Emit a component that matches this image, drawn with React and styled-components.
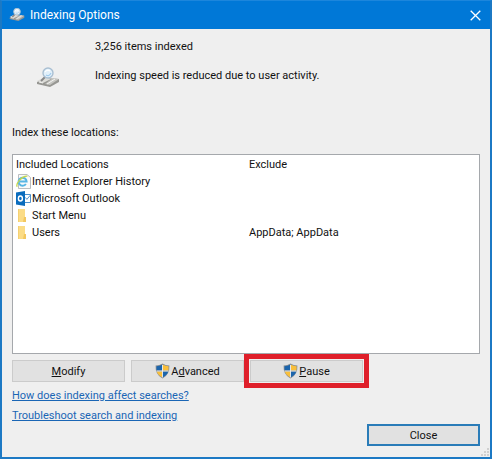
import React from "react";
import styled, { createGlobalStyle } from "styled-components";

const locations = [
  { id: 1, icon: "ie", name: "Internet Explorer History", exclude: "" },
  { id: 2, icon: "outlook", name: "Microsoft Outlook", exclude: "" },
  { id: 3, icon: "folder", name: "Start Menu", exclude: "" },
  { id: 4, icon: "folder", name: "Users", exclude: "AppData; AppData" },
];

const DriveIcon = ({ size }) => (
  <svg width={size} height={size} viewBox="0 0 24 24" aria-hidden="true">
    <path d="M1 16 L9 12 L23 13 L23 16 L14 21 L1 18 Z" fill="#979793" />
    <path d="M1 15 L9 11 L15 13 L7 17 Z" fill="#dcdcd8" />
    <path d="M9 18 L17 12 L23 13 L14 19 Z" fill="#c6c6c2" />
    <path d="M11 18 L19 13 M3 16 L7 17" stroke="#f4f4f2" strokeWidth="1" />
    <path d="M9 11 L5 15" stroke="#888" strokeWidth="2" />
    <circle cx="12" cy="7" r="5" fill="#e2f0fa" stroke="#a9bfd2" strokeWidth="1.4" />
    <path d="M9 6 Q11 3 14 5" fill="none" stroke="#fff" strokeWidth="1.2" />
    <path d="M10 9 Q13 11 15 7" fill="none" stroke="#9fcbec" strokeWidth="1.2" />
  </svg>
);

const ShieldIcon = () => (
  <svg width="15" height="16" viewBox="0 0 15 16" aria-hidden="true">
    <path d="M7.5 0.5 Q10.5 2.4 14.4 2.4 Q15 11.5 7.5 15.6 Q0 11.5 0.6 2.4 Q4.5 2.4 7.5 0.5 Z" fill="#8a9095" />
    <path d="M7 1.8 L7 7.5 L1.6 7.5 Q1.3 5.5 1.5 3.3 Q4.6 3.2 7 1.8 Z" fill="#1c65ac" />
    <path d="M8 1.8 Q10.4 3.2 13.5 3.3 Q13.7 5.5 13.4 7.5 L8 7.5 Z" fill="#f9bf3b" />
    <path d="M1.8 8.5 L7 8.5 L7 14.3 Q2.8 12 1.8 8.5 Z" fill="#f9bf3b" />
    <path d="M8 8.5 L13.2 8.5 Q12.2 12 8 14.3 Z" fill="#1c65ac" />
    <path d="M7.5 2 V14.4 M1.6 8 H13.4" stroke="#eef1f3" strokeWidth="0.9" />
  </svg>
);

const LocationIcon = ({ type }) => {
  if (type === "ie") {
    return (
      <svg width="15" height="15" viewBox="0 0 15 15" aria-hidden="true">
        <path d="M2.5 0.5 H11 L14.5 3.5 V14.5 H2.5 Z" fill="#fafafa" stroke="#a9adb0" strokeWidth="0.8" />
        <path d="M9.9 10 A4 4 0 1 1 10.6 7.6 H3.5" fill="none" stroke="#58b6e4" strokeWidth="2" />
        <path d="M1.2 12.8 C-0.6 9.6 6 1.6 11.4 2.2" fill="none" stroke="#c5d64c" strokeWidth="1.3" />
      </svg>
    );
  }
  if (type === "outlook") {
    return (
      <svg width="15" height="15" viewBox="0 0 15 15" aria-hidden="true">
        <path d="M8 3.5 H14.5 V11.5 H8 Z" fill="#fff" stroke="#3c86c6" strokeWidth="0.9" />
        <path d="M9.3 6.4 L10.9 8.4 L14.3 4.2" fill="none" stroke="#3c86c6" strokeWidth="0.9" />
        <path d="M0 1.5 L9 0 V15 L0 13.5 Z" fill="#0a6cbd" />
        <ellipse cx="4.4" cy="7.5" rx="2" ry="2.5" fill="none" stroke="#fff" strokeWidth="1.4" />
      </svg>
    );
  }
  return (
    <svg width="15" height="15" viewBox="0 0 15 15" aria-hidden="true">
      <path d="M2 1 H9 V9 H10 V14 H2 Z" fill="#fbdc86" />
      <path d="M8 9 H10 V14 H7 Z" fill="#f3c75f" />
      <path d="M2 1 H3 V14 H2 Z" fill="#f5d071" />
    </svg>
  );
};

const App = () => {
  return (
    <>
      <GlobalStyle />
      <Window>
        <TitleBar>
          <DriveIcon size={16} />
          <h1>Indexing Options</h1>
          <CloseX type="button" aria-label="Close window">
            <svg width="11" height="11" viewBox="0 0 11 11" aria-hidden="true">
              <path d="M0.7 0.7 L10.3 10.3 M10.3 0.7 L0.7 10.3" stroke="#fff" strokeWidth="1.3" />
            </svg>
          </CloseX>
        </TitleBar>
        <Content>
          <Status>
            <DriveIcon size={24} />
            <StatusText>
              <p>3,256 items indexed</p>
              <p>Indexing speed is reduced due to user activity.</p>
            </StatusText>
          </Status>
          <ListLabel id="locations-label">Index these locations:</ListLabel>
          <ListBox>
            <Table aria-labelledby="locations-label">
              <thead>
                <tr>
                  <th>Included Locations</th>
                  <th>Exclude</th>
                </tr>
              </thead>
              <tbody>
                {locations.map((item) => (
                  <tr key={item.id}>
                    <td>
                      <Location>
                        <LocationIcon type={item.icon} />
                        {item.name}
                      </Location>
                    </td>
                    <td>{item.exclude}</td>
                  </tr>
                ))}
              </tbody>
            </Table>
          </ListBox>
          <Actions>
            <Button type="button">
              <span><u>M</u>odify</span>
            </Button>
            <Button type="button">
              <ShieldIcon />
              <span>A<u>d</u>vanced</span>
            </Button>
            <Highlighted>
              <Button type="button">
                <ShieldIcon />
                <span><u>P</u>ause</span>
              </Button>
            </Highlighted>
          </Actions>
          <Links>
            <a href="#searches">How does indexing affect searches?</a>
            <a href="#troubleshoot">Troubleshoot search and indexing</a>
          </Links>
          <Footer>
            <Button type="button" $primary>Close</Button>
          </Footer>
        </Content>
        <Grip width="8" height="8" viewBox="0 0 8 8" aria-hidden="true">
          <path d="M6 0h2v2h-2z M3 3h2v2h-2z M6 3h2v2h-2z M0 6h2v2h-2z M3 6h2v2h-2z M6 6h2v2h-2z" fill="#d0d0d0" />
        </Grip>
      </Window>
    </>
  );
};

export default App;

const GlobalStyle = createGlobalStyle`
  * {
    box-sizing: border-box;
  }

  body {
    margin: 0;
    font-family: Roboto, "Noto Sans", sans-serif;
    font-size: 11px;
    line-height: 17px;
    color: #111;
  }

  h1, p {
    margin: 0;
  }

  button {
    font: inherit;
    color: inherit;
  }
`;

const Window = styled.main`
  position: relative;
  min-height: 100vh;
  display: flex;
  flex-direction: column;
  background: #efefef;
  border: 2px solid #1c79c4;
  border-top: 1px solid #1c86dc;
`;

const TitleBar = styled.header`
  height: 28px;
  display: flex;
  align-items: center;
  gap: 5px;
  padding: 0 9px 0 7px;
  background: #0078d7;
  color: #fff;

  h1 {
    flex: 1;
    font-size: 12px;
    font-weight: 400;
  }
`;

const CloseX = styled.button`
  display: flex;
  padding: 0;
  background: none;
  border: none;
`;

const Content = styled.div`
  flex: 1;
  display: flex;
  flex-direction: column;
  padding: 9px 10px 11px;
`;

const Status = styled.section`
  display: flex;
  align-items: flex-end;
  gap: 35px;
  padding-left: 24px;
`;

const StatusText = styled.div`
  display: grid;
  gap: 12px;
  padding-bottom: 6px;
`;

const ListLabel = styled.div`
  margin: 34px 0 13px;
`;

const ListBox = styled.div`
  flex: 1;
  background: #fff;
  border: 1px solid #a5a8ac;
`;

const Table = styled.table`
  width: 100%;
  table-layout: fixed;
  border-collapse: collapse;

  th,
  td {
    height: 17px;
    padding: 0 3px;
    font-weight: 400;
    text-align: left;
  }

  th {
    padding-top: 1px;
  }
`;

const Location = styled.span`
  display: flex;
  align-items: center;
  gap: 1px;
`;

const Actions = styled.div`
  display: flex;
  gap: 6px;
  margin-top: 6px;
`;

const Button = styled.button`
  width: 113px;
  height: 22px;
  display: flex;
  align-items: center;
  justify-content: center;
  gap: 1px;
  padding: 0;
  background: #e1e1e1;
  border: ${({ $primary }) => ($primary ? "2px solid #2a7cb8" : "1px solid #cbcbcb")};
`;

const Highlighted = styled.div`
  position: relative;

  &::after {
    content: "";
    position: absolute;
    inset: -6px;
    border: 5px solid #df1f2a;
    pointer-events: none;
  }
`;

const Links = styled.nav`
  display: flex;
  flex-direction: column;
  align-items: flex-start;
  gap: 3px;
  margin-top: 5px;

  a {
    color: #1a66b5;
  }
`;

const Footer = styled.footer`
  display: flex;
  justify-content: flex-end;
`;

const Grip = styled.svg`
  position: absolute;
  right: 1px;
  bottom: 1px;
`;
